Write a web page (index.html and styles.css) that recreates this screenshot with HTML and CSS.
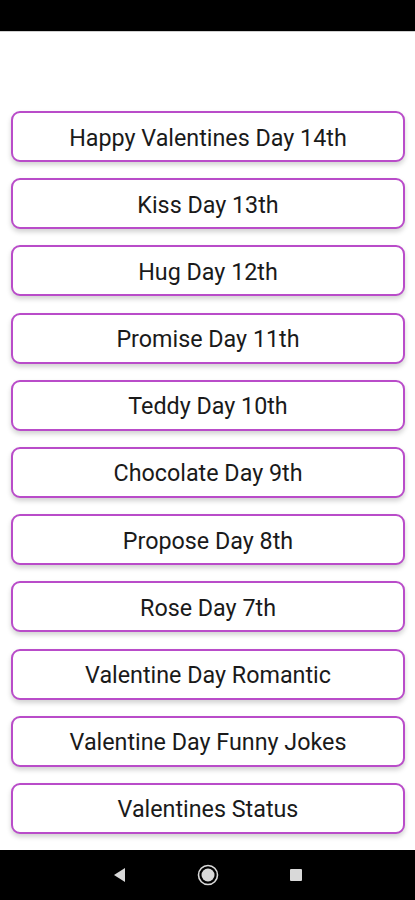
FILE: index.html
```html
<!DOCTYPE html>
<html lang="en">
<head>
    <meta charset="UTF-8">
    <meta name="viewport" content="width=device-width, initial-scale=1.0">
    <title>Valentine Week</title>
    <link rel="stylesheet" href="styles.css">
</head>
<body>

<div class="status-bar"></div>

<div class="container">
    <div class="menu">
        <button class="menu-button">Happy Valentines Day 14th</button>
        <button class="menu-button">Kiss Day 13th</button>
        <button class="menu-button">Hug Day 12th</button>
        <button class="menu-button">Promise Day 11th</button>
        <button class="menu-button">Teddy Day 10th</button>
        <button class="menu-button">Chocolate Day 9th</button>
        <button class="menu-button">Propose Day 8th</button>
        <button class="menu-button">Rose Day 7th</button>
        <button class="menu-button">Valentine Day Romantic</button>
        <button class="menu-button">Valentine Day Funny Jokes</button>
        <button class="menu-button">Valentines Status</button>
    </div>
</div>

<!-- Android navigation bar -->
<div class="nav-bar">
    <svg width="14" height="16" viewBox="0 0 14 16">
        <polygon points="12,1 12,15 1,8" fill="#d9d9d9"/>
    </svg>
    <svg width="22" height="22" viewBox="0 0 22 22">
        <circle cx="11" cy="11" r="9.5" fill="none" stroke="#d9d9d9" stroke-width="1.6"/>
        <circle cx="11" cy="11" r="6.5" fill="#d9d9d9"/>
    </svg>
    <svg width="14" height="14" viewBox="0 0 14 14">
        <rect x="1" y="1" width="12" height="12" rx="1" fill="#d9d9d9"/>
    </svg>
</div>

</body>
</html>
```

FILE: styles.css
```css
body {
    margin: 0;
    font-family: Roboto, "Noto Sans", Arial, sans-serif;
    background-color: #ffffff;
    height: 900px;
    display: flex;
    flex-direction: column;
    overflow: hidden;
}

.status-bar {
    height: 31px;
    background-color: #000000;
    border-bottom: 1px solid #cfcfcf;
    flex-shrink: 0;
}

.container {
    flex: 1;
    padding: 79px 10px 0 11px;
}

.menu {
    display: flex;
    flex-direction: column;
    gap: 16.2px;
}

.menu-button {
    height: 51px;
    width: 100%;
    background: #ffffff;
    border: 2px solid #b94cc9;
    border-radius: 9px;
    box-shadow: 0 3px 5px rgba(0, 0, 0, 0.18);
    font-family: Roboto, "Noto Sans", Arial, sans-serif;
    font-size: 23.3px;
    color: #1a1a1a;
    cursor: pointer;
    padding: 2px 0 0;
}

.nav-bar {
    height: 50px;
    background-color: #000000;
    flex-shrink: 0;
    display: flex;
    justify-content: center;
    align-items: center;
    gap: 70px;
}
```
